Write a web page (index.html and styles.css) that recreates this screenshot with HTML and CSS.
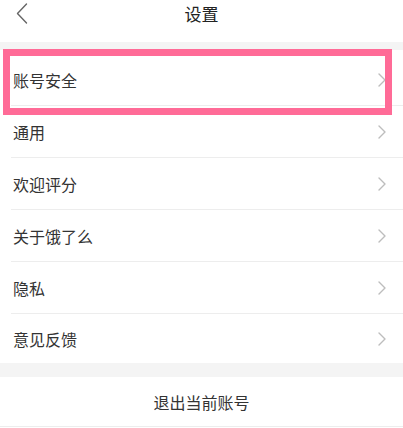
FILE: index.html
```html
<!DOCTYPE html>
<html lang="zh-CN">
<head>
<meta charset="utf-8">
<title>设置</title>
<link rel="stylesheet" href="styles.css">
</head>
<body>
<div class="page">
  <header class="header">
    <div class="back">
      <svg width="12" height="21" viewBox="0 0 12 21"><path d="M10.5 1 L1.5 10.5 L10.5 20" fill="none" stroke="#666" stroke-width="1.4" stroke-linecap="round" stroke-linejoin="round"/></svg>
    </div>
    <div class="title">设置</div>
    <div></div>
  </header>
  <div class="gap"></div>
  <ul class="list">
    <li class="row"><span>账号安全</span><svg class="chev" width="10" height="14" viewBox="0 0 10 14"><path d="M2 1 L8 7 L2 13" fill="none" stroke="#bdbdbd" stroke-width="1.4" stroke-linecap="round" stroke-linejoin="round"/></svg></li>
    <li class="row"><span>通用</span><svg class="chev" width="10" height="14" viewBox="0 0 10 14"><path d="M2 1 L8 7 L2 13" fill="none" stroke="#bdbdbd" stroke-width="1.4" stroke-linecap="round" stroke-linejoin="round"/></svg></li>
    <li class="row"><span>欢迎评分</span><svg class="chev" width="10" height="14" viewBox="0 0 10 14"><path d="M2 1 L8 7 L2 13" fill="none" stroke="#bdbdbd" stroke-width="1.4" stroke-linecap="round" stroke-linejoin="round"/></svg></li>
    <li class="row"><span>关于饿了么</span><svg class="chev" width="10" height="14" viewBox="0 0 10 14"><path d="M2 1 L8 7 L2 13" fill="none" stroke="#bdbdbd" stroke-width="1.4" stroke-linecap="round" stroke-linejoin="round"/></svg></li>
    <li class="row"><span>隐私</span><svg class="chev" width="10" height="14" viewBox="0 0 10 14"><path d="M2 1 L8 7 L2 13" fill="none" stroke="#bdbdbd" stroke-width="1.4" stroke-linecap="round" stroke-linejoin="round"/></svg></li>
    <li class="row last"><span>意见反馈</span><svg class="chev" width="10" height="14" viewBox="0 0 10 14"><path d="M2 1 L8 7 L2 13" fill="none" stroke="#bdbdbd" stroke-width="1.4" stroke-linecap="round" stroke-linejoin="round"/></svg></li>
  </ul>
  <div class="gap2"></div>
  <div class="logout">退出当前账号</div>
  <div class="highlight"></div>
</div>
</body>
</html>
```
FILE: styles.css
```css
* { box-sizing: border-box; }
html, body { margin: 0; padding: 0; background: #fff; }
body {
  font-family: "Noto Sans CJK SC", "Noto Sans", sans-serif;
  color: #333;
}
.page {
  position: relative;
  width: 403px;
  height: 428px;
  overflow: hidden;
  background: #fff;
}
.header {
  height: 42px;
  display: grid;
  grid-template-columns: 1fr auto 1fr;
  align-items: start;
}
.back {
  padding-left: 16px;
  padding-top: 3px;
  display: flex;
}
.title {
  font-size: 17px;
  line-height: 28px;
  color: #222;
}
.gap {
  height: 8px;
  background: #f4f4f4;
}
.list {
  list-style: none;
  margin: 0;
  padding: 4px 0 0 0;
  background: #fff;
}
.row {
  height: 52px;
  margin-left: 11px;
  padding: 0 16px 0 2px;
  border-bottom: 1px solid #ededed;
  display: flex;
  align-items: center;
  justify-content: space-between;
  font-size: 16px;
}
.row.last {
  height: 49px;
  border-bottom: none;
}
.chev { display: block; }
.gap2 {
  height: 14px;
  background: #f4f4f4;
}
.logout {
  height: 50px;
  padding-top: 1px;
  border-bottom: 1px solid #ededed;
  display: flex;
  align-items: center;
  justify-content: center;
  font-size: 16px;
  color: #333;
}
.highlight {
  position: absolute;
  left: 3px;
  top: 49px;
  width: 389px;
  height: 66px;
  border: 7px solid #ff6b97;
}
```
